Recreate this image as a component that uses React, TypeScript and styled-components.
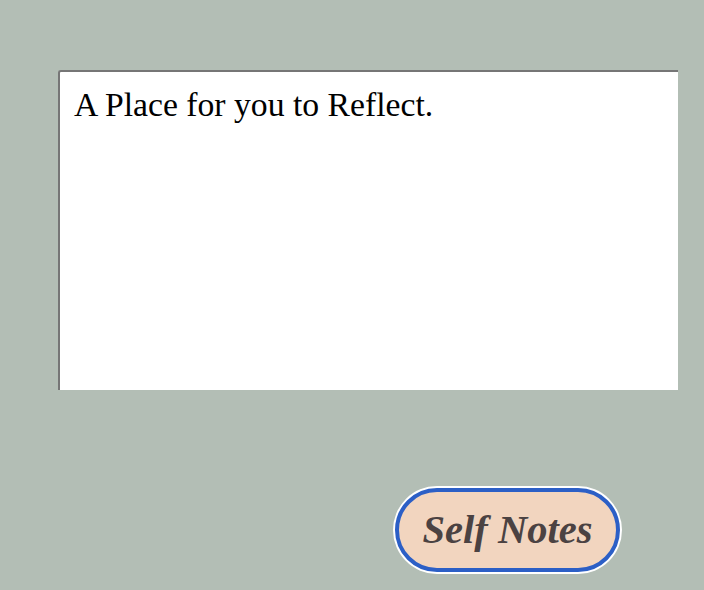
import React from 'react';
import styled, { createGlobalStyle } from 'styled-components';

const GlobalStyle = createGlobalStyle`
  html, body {
    margin: 0;
    padding: 0;
    background: #b3beb5;
  }
`;

const Page = styled.main`
  display: flex;
  flex-direction: column;
  align-items: flex-start;
  min-height: 590px;
  padding: 70px 0 0 58px;
  box-sizing: border-box;
`;

const Journal = styled.textarea`
  box-sizing: border-box;
  width: 620px;
  height: 320px;
  margin: 0;
  padding: 14px 14px;
  border: none;
  border-top: 2px solid #767676;
  border-left: 2px solid #767676;
  border-top-left-radius: 3px;
  background: #ffffff;
  color: #000000;
  font-family: 'Liberation Serif', 'Times New Roman', serif;
  font-size: 33.7px;
  resize: none;
  outline: none;
  overflow: hidden;

  &::placeholder {
    color: #000000;
    opacity: 1;
  }
`;

const Footer = styled.div`
  display: flex;
  margin-top: 98px;
  padding-left: 337px;
`;

const NotesButton = styled.button`
  box-sizing: border-box;
  width: 225px;
  height: 84px;
  border: 4px solid #2c5fc6;
  border-radius: 42px;
  box-shadow: 0 0 0 2px #ffffff;
  background: #f2d5bf;
  color: #4b4242;
  font-family: 'Liberation Serif', 'Times New Roman', serif;
  font-size: 40.5px;
  font-weight: bold;
  font-style: italic;
  padding: 0 0 2px;
  cursor: pointer;
`;

export default function App() {
  return (
    <>
      <GlobalStyle />
      <Page>
        <Journal placeholder="A Place for you to Reflect." />
        <Footer>
          <NotesButton>Self Notes</NotesButton>
        </Footer>
      </Page>
    </>
  );
}
